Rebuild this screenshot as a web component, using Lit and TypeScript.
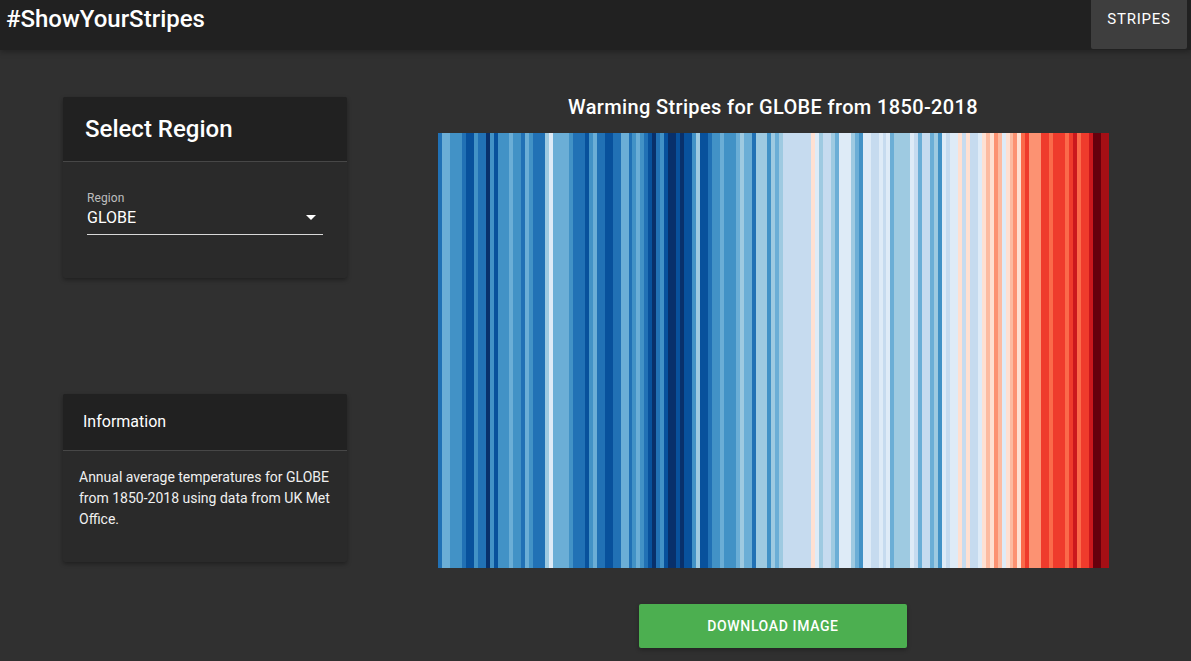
import { LitElement, css, html } from 'lit';
import { customElement, state } from 'lit/decorators.js';

// ColorBrewer blues + reds, one letter per shade
const PALETTE: Record<string, string> = {
  a: '#08306b', b: '#08519c', c: '#2171b5', d: '#4292c6',
  e: '#6baed6', f: '#9ecae1', g: '#c6dbef', h: '#deebf7',
  i: '#fee0d2', j: '#fcbba1', k: '#fc9272', l: '#fb6a4a',
  m: '#ef3b2c', n: '#cb181d', o: '#a50f15', p: '#67000d',
};

// one letter per year, 1850-2018
const YEARS =
  'ceedddcbbdccadbdddeddcedcccfheeeedcccbdeccbbcceecdedcbacd' +
  'baabab' + 'bdfbbcddedddefeecfffdfefgggggggihfggfehhhfedhhgghgh' +
  'effffhgegge' + 'fdhghhigigg' + 'hijikjhijkilm' + 'kkkmmlmmmlmnlmmnppoo';

@customElement('app-root')
export class AppRoot extends LitElement {
  @state() private region = 'GLOBE';

  static override styles = css`
    :host {
      display: block;
      min-height: 661px;
      background: #303030;
      color: #fff;
      font-family: Roboto, 'Liberation Sans', sans-serif;
    }

    .bar {
      display: flex;
      justify-content: space-between;
      height: 50px;
      padding: 0 4px 0 6px;
      background: #212121;
      box-shadow: 0 2px 6px rgba(0, 0, 0, 0.3);
    }

    .brand {
      margin: 5px 0 0;
      font-size: 24px;
      line-height: 28px;
      font-weight: 500;
    }

    .tab {
      width: 96px;
      height: 49px;
      padding-bottom: 12px;
      box-sizing: border-box;
      border: 0;
      border-radius: 0 0 2px 2px;
      background: #3e3e3e;
      color: #fff;
      font: 400 15px/1 Roboto, sans-serif;
      letter-spacing: 0.75px;
    }

    .page {
      display: flex;
      gap: 91px;
      padding: 47px 0 0 63px;
    }

    .side {
      display: flex;
      flex-direction: column;
      gap: 116px;
      width: 284px;
    }

    .card {
      border-radius: 2px;
      background: #2a2a2a;
      box-shadow: 0 2px 4px rgba(0, 0, 0, 0.35);
    }

    .card-head {
      background: #212121;
      border-bottom: 1px solid #474747;
      border-radius: 2px 2px 0 0;
      font-weight: 500;
    }

    .region .card-head {
      height: 64px;
      padding-left: 22px;
      font-size: 24px;
      line-height: 64px;
    }

    .region .card-body {
      height: 116px;
      padding: 29px 24px 0;
      box-sizing: border-box;
    }

    .field-label {
      font-size: 12px;
      line-height: 14px;
      letter-spacing: 0.1px;
      color: rgba(255, 255, 255, 0.7);
    }

    .select {
      display: flex;
      align-items: center;
      justify-content: space-between;
      height: 28px;
      margin-top: -2px;
      border-bottom: 1px solid #d8d8d8;
      padding: 0 7px 3px 0;
      font-size: 16px;
    }

    .select svg {
      width: 10px;
      height: 5px;
      fill: #fff;
    }

    .info .card-head {
      height: 56px;
      padding-left: 20px;
      font-size: 16px;
      font-weight: 400;
      line-height: 55px;
    }

    .info .card-body {
      height: 111px;
      padding: 16px 16px 0;
      box-sizing: border-box;
      font-size: 14px;
      line-height: 21px;
    }

    .info p {
      margin: 0;
      color: #f0f0f0;
    }

    .main {
      display: flex;
      flex-direction: column;
      align-items: center;
      width: 670px;
    }

    .chart-title {
      margin: -1px 0 14px;
      font-size: 20px;
      line-height: 23px;
      font-weight: 500;
      letter-spacing: 0.36px;
    }

    .stripes {
      display: flex;
      width: 100%;
      height: 435px;
    }

    .stripes div {
      flex: 1;
    }

    .download {
      width: 268px;
      height: 44px;
      margin-top: 36px;
      border: 0;
      border-radius: 2px;
      background: #4caf50;
      color: #fff;
      font: 500 14px Roboto, sans-serif;
      letter-spacing: 0.63px;
      box-shadow: 0 2px 4px rgba(0, 0, 0, 0.3);
    }
  `;

  protected override render() {
    return html`
      <header class="bar">
        <h1 class="brand">#ShowYourStripes</h1>
        <button class="tab">STRIPES</button>
      </header>
      <div class="page">
        <aside class="side">
          <section class="card region">
            <div class="card-head">Select Region</div>
            <div class="card-body">
              <div class="field-label">Region</div>
              <div class="select">
                <span>${this.region}</span>
                <svg viewBox="0 0 10 5"><path d="M0 0l5 5 5-5z"></path></svg>
              </div>
            </div>
          </section>
          <section class="card info">
            <div class="card-head">Information</div>
            <div class="card-body">
              <p>Annual average temperatures for ${this.region} from 1850-2018 using data from UK Met Office.</p>
            </div>
          </section>
        </aside>
        <main class="main">
          <h2 class="chart-title">Warming Stripes for ${this.region} from 1850-2018</h2>
          <div class="stripes">
            ${[...YEARS].map((y) => html`<div style="background:${PALETTE[y]}"></div>`)}
          </div>
          <button class="download">DOWNLOAD IMAGE</button>
        </main>
      </div>
    `;
  }
}
